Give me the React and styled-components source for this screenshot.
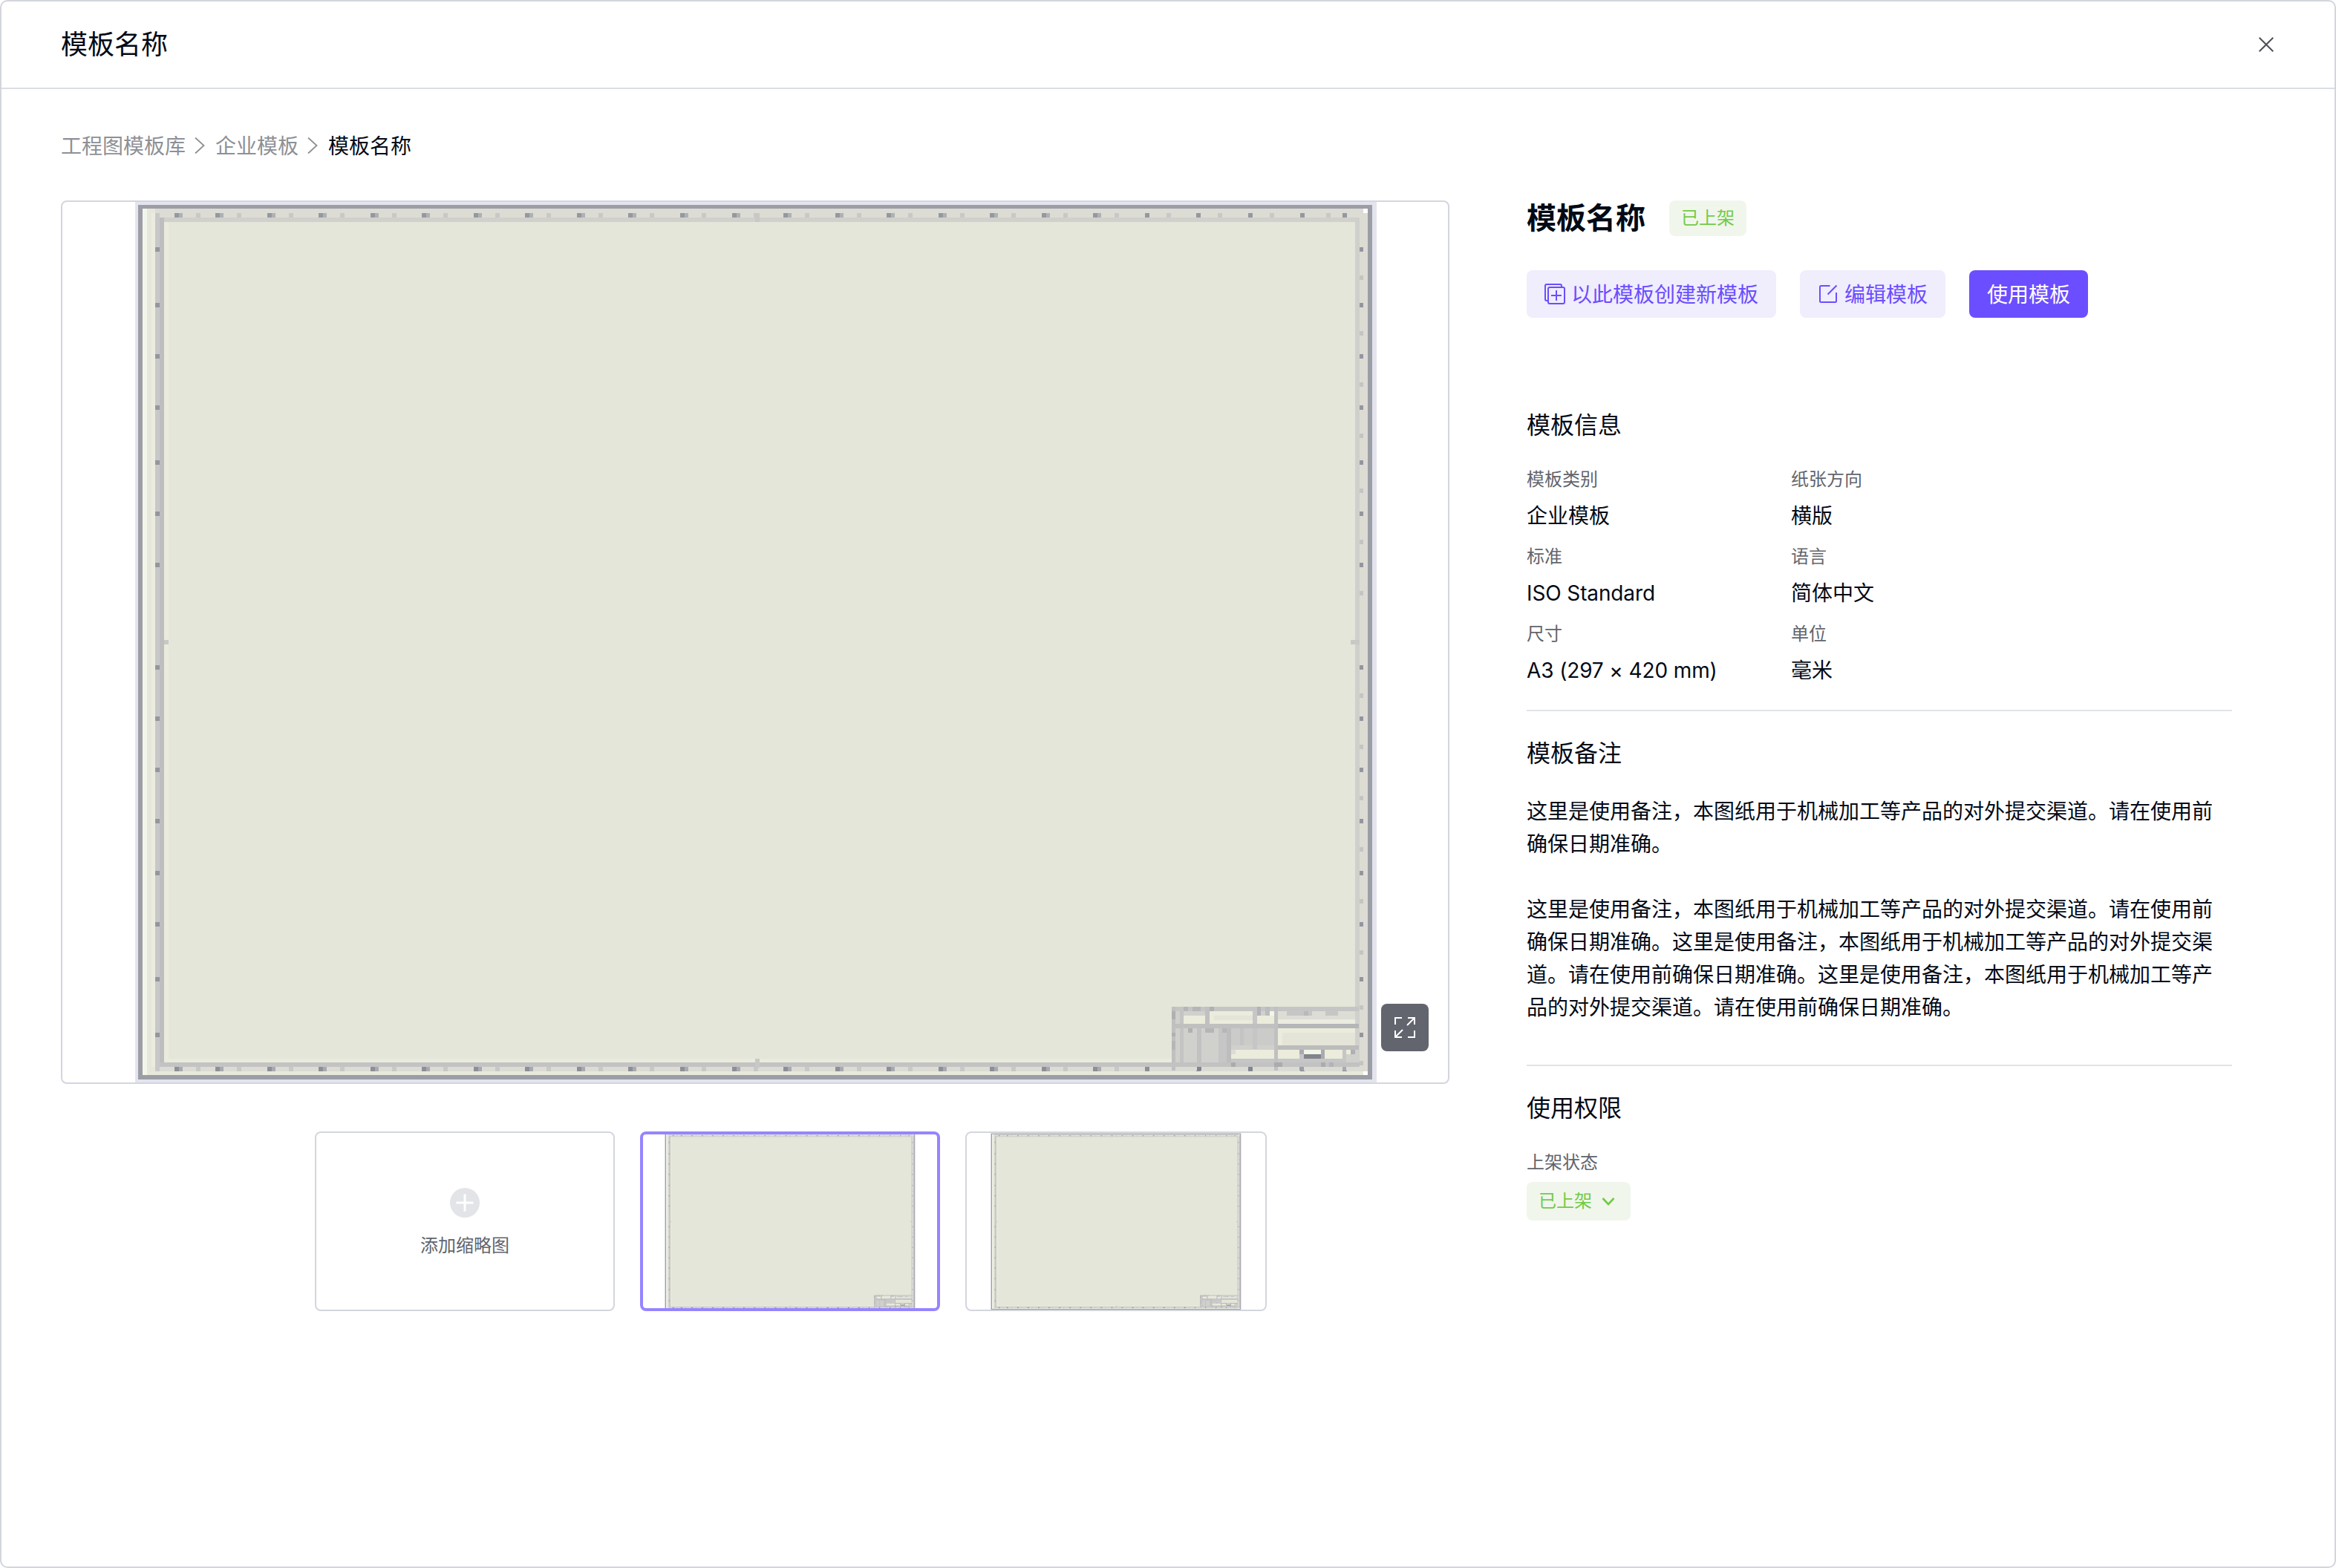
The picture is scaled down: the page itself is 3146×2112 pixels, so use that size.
import React from "react";
import styled, { createGlobalStyle, css } from "styled-components";

const Global = createGlobalStyle`
  *, *::before, *::after { box-sizing: border-box; }
  html, body { margin: 0; background: #fff; }
  body { font-family: Inter, "Noto Sans CJK SC", sans-serif; color: #030a16; }
  h1, h2, h3, p, dl, dt, dd { margin: 0; font-weight: 400; }
  button { font: inherit; border: 0; margin: 0; }
  svg { display: block; flex: none; }
`;

const Dialog = styled.div`
  width: 3146px;
  height: 2112px;
  border: 2px solid #d3d6dc;
  border-radius: 10px;
  background: #fff;
  overflow: hidden;
`;

const Header = styled.header`
  display: flex;
  align-items: center;
  justify-content: space-between;
  height: 118px;
  padding: 0 82px 0 80px;
  border-bottom: 2px solid #dbdee3;
`;

const DialogTitle = styled.h1`
  font-size: 36px;
  line-height: 52px;
`;

const CloseButton = styled.button`
  display: flex;
  padding: 0;
  background: none;
`;

const Body = styled.main`
  padding: 55px 80px 0;
`;

const Breadcrumb = styled.nav`
  display: flex;
  align-items: center;
  gap: 12px;
  margin-bottom: 51px;
  font-size: 28px;
  line-height: 44px;
`;

const Crumb = styled.span`
  color: ${(p) => (p.$current ? "#030a16" : "#8e9096")};
`;

const Columns = styled.div`
  display: flex;
  align-items: flex-start;
  gap: 104px;
`;

const Gallery = styled.section`
  width: 1870px;
`;

const Preview = styled.div`
  position: relative;
  display: flex;
  height: 1190px;
  padding-left: 98px;
  border: 2px solid #d3d6df;
  border-radius: 8px;
  overflow: hidden;
`;

const FullscreenButton = styled.button`
  position: absolute;
  right: 26px;
  bottom: 42px;
  display: flex;
  align-items: center;
  justify-content: center;
  width: 64px;
  height: 64px;
  padding: 0;
  border-radius: 8px;
  background: #62656d;
`;

const Thumbs = styled.div`
  display: flex;
  gap: 34px;
  margin-top: 64px;
  padding-left: 342px;
`;

const Thumb = styled.div`
  display: flex;
  flex-direction: column;
  align-items: center;
  justify-content: center;
  width: ${(p) => p.$width || 404}px;
  height: 242px;
  border: ${(p) => (p.$active ? "4px solid #9585ff" : "2px solid #d3d6dc")};
  border-radius: 8px;
  overflow: hidden;
`;

const AddIcon = styled.svg`
  margin-top: 4px;
`;

const AddLabel = styled.span`
  margin-top: 22px;
  font-size: 24px;
  line-height: 32px;
  color: #62656d;
`;

const Details = styled.aside`
  width: 950px;
`;

const TitleRow = styled.div`
  display: flex;
  align-items: center;
  gap: 32px;
  height: 48px;
`;

const Name = styled.h2`
  font-size: 40px;
  font-weight: 600;
  line-height: 48px;
`;

const greenChip = css`
  display: inline-flex;
  align-items: center;
  padding: 0 16px;
  border-radius: 8px;
  background: #f1f6ec;
  color: #72cb48;
  font-size: 24px;
  line-height: 32px;
`;

const Tag = styled.span`
  ${greenChip}
  height: 48px;
`;

const StatusSelect = styled.button`
  ${greenChip}
  justify-content: space-between;
  width: 140px;
  height: 52px;
  margin-top: 10px;
  padding-right: 21px;
`;

const Actions = styled.div`
  display: flex;
  gap: 32px;
  margin-top: 46px;
`;

const Button = styled.button`
  display: flex;
  align-items: center;
  gap: 8px;
  height: 64px;
  padding: 0 24px;
  border-radius: 8px;
  font-size: 28px;
  line-height: 44px;
  background: ${(p) => (p.$primary ? "#6b4eff" : "#f0edfd")};
  color: ${(p) => (p.$primary ? "#fff" : "#6b4eff")};
`;

const ButtonText = styled.span`
  padding-top: 2px;
`;

const Section = styled.section`
  margin-top: ${(p) => p.$top}px;
  padding-top: ${(p) => (p.$ruled ? 35 : 0)}px;
  border-top: ${(p) => (p.$ruled ? "2px solid #e0e3ea" : "0")};
`;

const SectionTitle = styled.h3`
  font-size: 32px;
  line-height: 44px;
`;

const InfoGrid = styled.dl`
  display: grid;
  grid-template-columns: 356px 1fr;
  row-gap: 17px;
  margin-top: 35px;
`;

const Label = styled.dt`
  font-size: 24px;
  line-height: 32px;
  color: #62656d;
`;

const Value = styled.dd`
  margin-top: 11px;
  font-size: 28px;
  line-height: 44px;
  letter-spacing: ${(p) => (p.$latin ? "-0.12px" : "normal")};
`;

const Note = styled.p`
  margin-top: ${(p) => p.$top}px;
  font-size: 28px;
  line-height: 44px;
`;

const StatusField = styled.div`
  margin-top: 35px;
  font-size: 24px;
  line-height: 32px;
  color: #62656d;
`;

const range = (start, step, n) => Array.from({ length: n }, (_, i) => Math.round(start + step * i));
const TOP = [235, ...range(290, 69.55, 22), 1808];
const SIDE = [333, 408, 477, 546, 620, 689, 758, 896, 965, 1034, 1103, 1173, 1242, 1316, 1391];

/* Title block cells: x, y, width, height, colour; three units to one sheet unit. */
const CELLS = [
  [113, 109, 758, 241, "#d0d1cc"],
  [113, 350, 742, 17, "#dadbd3"],
  [113, 109, 758, 17, "#c5c5c5"],
  [163, 109, 18, 17, "#b5b6b8"], [198, 109, 34, 17, "#b5b6b8"], [267, 109, 18, 17, "#aeb0b2"],
  [458, 109, 17, 35, "#b2b3b6"], [492, 109, 18, 35, "#bbbcbd"],
  [163, 144, 87, 34, "#ebecdc"], [267, 126, 173, 52, "#ebecdc"], [285, 144, 155, 17, "#e4e5d8"],
  [458, 144, 69, 34, "#ebecdc"], [510, 126, 17, 18, "#f2f7e8"],
  [250, 109, 17, 69, "#c0c0c0"],
  [543, 126, 312, 34, "#dcddd5"], [543, 160, 312, 18, "#ebecdf"],
  [578, 126, 102, 18, "#c6c6c5"], [648, 126, 18, 18, "#b8b9ba"], [735, 126, 50, 18, "#c6c6c5"],
  [354, 195, 86, 70, "#cbcbca"], [458, 195, 69, 70, "#cbcbca"], [390, 195, 14, 70, "#c4c4c4"],
  [354, 282, 173, 35, "#ebecdc"], [354, 282, 18, 18, "#dcddd5"],
  [543, 195, 312, 70, "#ebecdc"], [560, 213, 295, 52, "#e4e5d8"],
  [543, 282, 87, 35, "#ebecdc"], [733, 282, 70, 35, "#ebecdc"], [820, 282, 18, 18, "#ebecdc"],
  [146, 126, 17, 224, "#c4c4c4"], [217, 178, 16, 172, "#c2c2c2"], [302, 178, 35, 172, "#c6c6c6"],
  [337, 178, 17, 172, "#bdbdbd"], [440, 126, 18, 154, "#c6c6c6"],
  [113, 109, 17, 258, "#c0c0c0"], [113, 126, 17, 34, "#aeb0b2"], [113, 213, 17, 16, "#aeb0b2"],
  [113, 247, 17, 34, "#b5b6b8"],
  [113, 178, 758, 17, "#c0c0c0"], [527, 178, 344, 17, "#b5b6b8"],
  [180, 195, 18, 18, "#b0b1b3"], [250, 195, 35, 18, "#b5b6b8"], [319, 195, 18, 18, "#b5b6b8"],
  [354, 317, 466, 16, "#c6c6c6"], [113, 333, 758, 17, "#c2c2c2"],
  [527, 265, 344, 17, "#bcbcbc"], [527, 109, 16, 258, "#c0c0c0"],
  [354, 333, 18, 17, "#a9abad"], [527, 333, 33, 17, "#a9abad"], [717, 333, 17, 17, "#a9abad"],
  [750, 333, 18, 17, "#b2b3b5"],
  [630, 282, 18, 18, "#a9aab0"], [648, 282, 69, 18, "#f0f5e6"], [717, 282, 16, 35, "#a9aab0"],
  [648, 300, 69, 17, "#82858c"], [630, 300, 18, 17, "#c6c6c6"],
  [803, 282, 17, 51, "#c6c6c6"], [838, 282, 17, 18, "#aeb0b2"],
  [217, 350, 16, 17, "#82858c"], [423, 350, 17, 17, "#82858c"],
  [630, 350, 18, 17, "#9c9ea6"], [803, 350, 17, 17, "#a9aab0"],
];

function Sheet({ width, height }) {
  return (
    <svg width={width} height={height} viewBox="182 272 1672 1186" preserveAspectRatio="none" shapeRendering={width > 1000 ? "crispEdges" : "auto"}>
      <rect x="182" y="272" width="1672" height="1186" fill="#e3e4ee" />
      <rect x="186" y="276" width="1662" height="1178" fill="#9c9ea6" />
      <rect x="192" y="281" width="1650" height="1167" fill="#dcdcd4" />
      <rect x="192" y="281" width="17" height="1167" fill="#e6e7da" />
      <rect x="192" y="281" width="6" height="1167" fill="#f2f6ea" />
      <rect x="204" y="287" width="5" height="1150" fill="#ebecdf" />
      <rect x="198" y="1443" width="1644" height="5" fill="#e8e9dc" />
      <rect x="209" y="287" width="6" height="1156" fill="#c8c8c8" />
      <rect x="215" y="293" width="1615" height="144" fill="#d0d1cb" />
      <rect x="215" y="293" width="6" height="1144" fill="#bebebf" />
      <rect x="1825" y="293" width="6" height="1144" fill="#cfd0cb" />
      <rect x="215" y="1431" width="1616" height="6" fill="#c3c3c3" />
      <rect x="221" y="299" width="1604" height="1132" fill="#e5e6da" />
      <rect x="221" y="299" width="6" height="1132" fill="#eaebdd" />
      <rect x="221" y="1426" width="1357" height="5" fill="#eaebdd" />
      <rect x="1836" y="281" width="6" height="6" fill="#fff" />
      <rect x="1836" y="1443" width="6" height="5" fill="#fff" />
      {TOP.map((x) => (
        <g key={x}>
          <rect x={x} y="287" width="6" height="6" fill="#9698a0" />
          {x < 1500 && <rect x={x + 6} y="287" width="5" height="6" fill="#b0b1b4" />}
          <rect x={x + (x > 1700 ? 35 : 29)} y="287" width={x > 1800 ? 0 : 6} height="6" fill="#c8c9c6" />
          <rect x={x} y="1437" width="6" height="6" fill="#8c8f96" />
          {x < 1500 && <rect x={x + 6} y="1437" width="5" height="6" fill="#a9aab0" />}
          <rect x={x + 29} y="1437" width={x > 1500 ? 0 : 6} height="6" fill="#c8c9c6" />
        </g>
      ))}
      {SIDE.map((y) => (
        <g key={y}>
          <rect x="209" y={y} width="6" height="6" fill="#94969e" />
          <rect x="1831" y={y} width="5" height="6" fill="#94969e" />
          <rect x="1831" y={y + 38} width="5" height="6" fill="#c4c5c3" />
        </g>
      ))}
      <rect x="221" y="862" width="6" height="6" fill="#c8c9c6" />
      <rect x="1819" y="862" width="12" height="6" fill="#c8c9c6" />
      <rect x="1017" y="287" width="6" height="12" fill="#c8c9c6" />
      <rect x="1017" y="1426" width="6" height="12" fill="#c8c9c6" />
      <g transform="translate(1540 1320) scale(0.33333)">
        {CELLS.map(([x, y, w, h, c], i) => (
          <rect key={i} x={x} y={y} width={w} height={h} fill={c} />
        ))}
      </g>
    </svg>
  );
}

const Line = ({ w, h = w, d, stroke = "currentColor", sw = 2, ...rest }) => (
  <svg width={w} height={h} viewBox={`0 0 ${w} ${h}`} fill="none" stroke={stroke} strokeWidth={sw} {...rest}>
    <path d={d} />
  </svg>
);

const Chevron = () => <Line w={16} h={24} d="M1 0.5L12.5 11L1 21.5" stroke="#8e9096" sw={1.8} />;

const INFO = [
  ["模板类别", "企业模板"],
  ["纸张方向", "横版"],
  ["标准", "ISO Standard"],
  ["语言", "简体中文"],
  ["尺寸", "A3 (297 × 420 mm)"],
  ["单位", "毫米"],
];

const NOTE = "这里是使用备注，本图纸用于机械加工等产品的对外提交渠道。请在使用前确保日期准确。";

export default function App() {
  return (
    <Dialog lang="zh-CN">
      <Global />
      <Header>
        <DialogTitle>模板名称</DialogTitle>
        <CloseButton aria-label="关闭">
          <Line w={20} d="M0.7 0.7L19.3 19.3M19.3 0.7L0.7 19.3" stroke="#4e5158" />
        </CloseButton>
      </Header>
      <Body>
        <Breadcrumb>
          <Crumb>工程图模板库</Crumb>
          <Chevron />
          <Crumb>企业模板</Crumb>
          <Chevron />
          <Crumb $current>模板名称</Crumb>
        </Breadcrumb>
        <Columns>
          <Gallery>
            <Preview>
              <Sheet width={1672} height={1186} />
              <FullscreenButton aria-label="全屏">
                <Line w={28} stroke="#fff" d="M10 1H1V10M18 1H27V10M27 1L17 11M1 18V27H10M1 27L11 17M18 27H27V18" />
              </FullscreenButton>
            </Preview>
            <Thumbs>
              <Thumb>
                <AddIcon width="40" height="40" viewBox="0 0 40 40">
                  <circle cx="20" cy="20" r="20" fill="#e2e4e8" />
                  <path d="M20 8.5V31.5M8.5 20H31.5" stroke="#fff" strokeWidth="3" />
                </AddIcon>
                <AddLabel>添加缩略图</AddLabel>
              </Thumb>
              <Thumb $active>
                <Sheet width={338} height={239} />
              </Thumb>
              <Thumb $width={406}>
                <Sheet width={338} height={239} />
              </Thumb>
            </Thumbs>
          </Gallery>
          <Details>
            <TitleRow>
              <Name>模板名称</Name>
              <Tag>已上架</Tag>
            </TitleRow>
            <Actions>
              <Button>
                <Line
                  w={28}
                  d="M5 23H3Q1 23 1 21V3Q1 1 3 1H21Q23 1 23 3V5M7 5H25Q27 5 27 7V25Q27 27 25 27H7Q5 27 5 25V7Q5 5 7 5ZM16 9V23M9 16H23"
                />
                <ButtonText>以此模板创建新模板</ButtonText>
              </Button>
              <Button>
                <Line w={28} d="M16.5 3H4.5Q3 3 3 4.5V23.5Q3 25 4.5 25H23.5Q25 25 25 23.5V12M13.5 14.5L25.5 2.5" />
                <ButtonText>编辑模板</ButtonText>
              </Button>
              <Button $primary>
                <ButtonText>使用模板</ButtonText>
              </Button>
            </Actions>
            <Section $top={123}>
              <SectionTitle>模板信息</SectionTitle>
              <InfoGrid>
                {INFO.map(([label, value]) => (
                  <div key={label}>
                    <Label>{label}</Label>
                    <Value $latin={/[A-Z]/.test(value)}>{value}</Value>
                  </div>
                ))}
              </InfoGrid>
            </Section>
            <Section $ruled $top={31}>
              <SectionTitle>模板备注</SectionTitle>
              <Note $top={34}>{NOTE}</Note>
              <Note $top={44}>{NOTE + NOTE + NOTE}</Note>
            </Section>
            <Section $ruled $top={55}>
              <SectionTitle>使用权限</SectionTitle>
              <StatusField>上架状态</StatusField>
              <StatusSelect>
                已上架
                <Line w={18} h={12} d="M1.5 2L9 10L16.5 2" sw={2.6} />
              </StatusSelect>
            </Section>
          </Details>
        </Columns>
      </Body>
    </Dialog>
  );
}
